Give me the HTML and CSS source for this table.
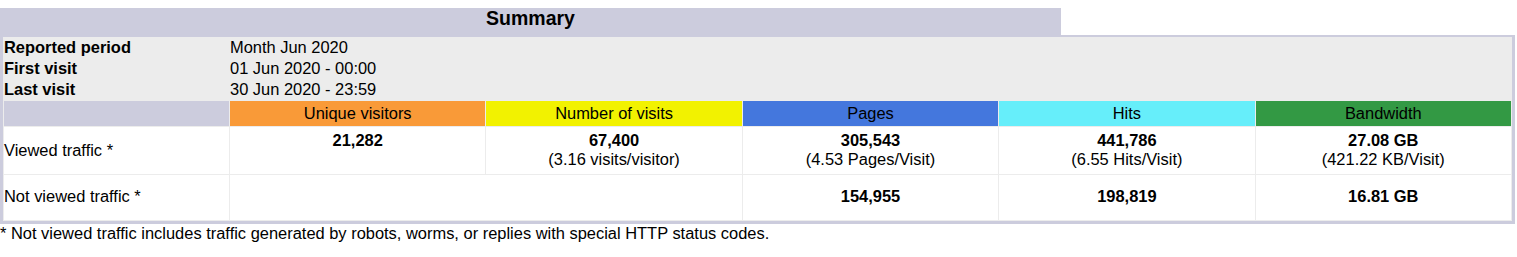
FILE: index.html
```html
<!DOCTYPE html>
<html lang="en">
<head>
<meta charset="utf-8">
<title>Summary</title>
<link rel="stylesheet" href="styles.css">
</head>
<body>
<div class="report">
  <div class="title-row">
    <div class="title">Summary</div>
  </div>
  <div class="frame">
    <table class="data">
      <colgroup>
        <col class="c-label">
        <col class="c-num"><col class="c-num"><col class="c-num"><col class="c-num"><col class="c-num">
      </colgroup>
      <tr class="info"><td class="lbl"><b>Reported period</b></td><td class="val" colspan="5">Month Jun 2020</td></tr>
      <tr class="info"><td class="lbl"><b>First visit</b></td><td class="val" colspan="5">01 Jun 2020 - 00:00</td></tr>
      <tr class="info"><td class="lbl"><b>Last visit</b></td><td class="val" colspan="5">30 Jun 2020 - 23:59</td></tr>
      <tr class="heads">
        <td class="blank">&nbsp;</td>
        <td class="h-u">Unique visitors</td>
        <td class="h-v">Number of visits</td>
        <td class="h-p">Pages</td>
        <td class="h-h">Hits</td>
        <td class="h-k">Bandwidth</td>
      </tr>
      <tr class="row r1">
        <td class="lbl">Viewed traffic&nbsp;*</td>
        <td><b>21,282</b><br>&nbsp;</td>
        <td><b>67,400</b><br>(3.16&nbsp;visits/visitor)</td>
        <td><b>305,543</b><br>(4.53&nbsp;Pages/Visit)</td>
        <td><b>441,786</b><br>(6.55&nbsp;Hits/Visit)</td>
        <td><b>27.08 GB</b><br>(421.22&nbsp;KB/Visit)</td>
      </tr>
      <tr class="row r2">
        <td class="lbl">Not viewed traffic&nbsp;*</td>
        <td colspan="2">&nbsp;<br>&nbsp;</td>
        <td><b>154,955</b></td>
        <td><b>198,819</b></td>
        <td><b>16.81 GB</b></td>
      </tr>
    </table>
  </div>
  <div class="note">* Not viewed traffic includes traffic generated by robots, worms, or replies with special HTTP status codes.</div>
</div>
</body>
</html>
```

FILE: styles.css
```css
html, body {
  margin: 0;
  padding: 0;
  background: #ffffff;
}

body {
  padding-top: 8px;
  font-family: "Liberation Sans", Arial, sans-serif;
  font-size: 16.45px;
  color: #000000;
}

.report {
  width: 1515px;
}

.title-row {
  display: flex;
}

.title {
  width: 1061px;
  height: 27px;
  box-sizing: border-box;
  background: #ccccdd;
  font-weight: bold;
  font-size: 19.5px;
  line-height: 20px;
  text-align: center;
}

.frame {
  background: #ccccdd;
  padding: 2px 3px 3px 3px;
}

.data {
  width: 100%;
  border-collapse: collapse;
  table-layout: fixed;
  background: #ffffff;
}

.c-label { width: 226px; }

.data td {
  border: 1px solid #ececec;
  padding: 0;
  text-align: center;
  line-height: 19px;
}

.data td.lbl,
.data td.val {
  text-align: left;
}

.info td {
  background: #ececec;
  height: 19px;
  line-height: 19px;
  padding: 0 0 1px 0;
}

.heads td {
  height: 24px;
  line-height: 24px;
  padding: 0 0 1px 0;
}

.heads .blank { background: #ccccdd; }
.h-u { background: #f99a38; }
.h-v { background: #f2f200; }
.h-p { background: #4477dd; }
.h-h { background: #66eefa; }
.h-k { background: #339944; }

.row td {
  background: #ffffff;
  vertical-align: middle;
}

.r1 td {
  padding-top: 4px;
  padding-bottom: 5px;
}

.r2 td {
  padding-top: 2px;
  padding-bottom: 5px;
}

.note {
  line-height: 19px;
}
```
